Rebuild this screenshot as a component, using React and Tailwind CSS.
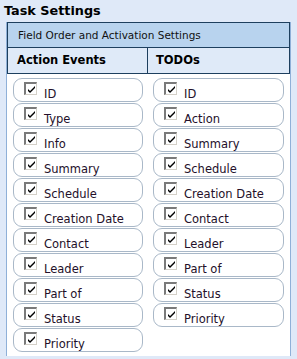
import React from "react";

const left = ["ID","Type","Info","Summary","Schedule","Creation Date","Contact","Leader","Part of","Status","Priority"];
const right = ["ID","Action","Summary","Schedule","Creation Date","Contact","Leader","Part of","Status","Priority"];

function Check() {
  return (
    <div className="w-[13px] h-[13px] bg-white border-t-2 border-l-2 border-t-[#7a7a7a] border-l-[#7a7a7a] border-b border-r border-b-[#d4d0c8] border-r-[#d4d0c8] flex items-center justify-center shrink-0">
      <svg width="9" height="9" viewBox="0 0 9 9">
        <path d="M1 4 L3 6 L8 1 L8 3 L3 8 L1 6 Z" fill="#000" />
      </svg>
    </div>
  );
}

function Item({ label }) {
  return (
    <div className="h-[24px] mb-[1px] rounded-[9px] border border-[#a9b8c8] bg-white flex items-start pl-[10px] pt-[3px]">
      <Check />
      <span className="ml-[7px] mt-[5px] leading-[14px] text-[11.5px] text-[#24102a]">{label}</span>
    </div>
  );
}

export default function App() {
  return (
    <div className="w-[297px] h-[359px] bg-[#dfe9f8] overflow-hidden" style={{ fontFamily: '"DejaVu Sans", Verdana, sans-serif' }}>
      <div className="h-[22px] pl-[4px] pt-[3px] leading-[15px] text-[12.8px] font-bold text-black">Task Settings</div>
      <div className="ml-[6px] w-[285px] h-[334px] bg-white border-l border-r border-[#8fb0d8] flex flex-col">
        <div className="h-[26px] border border-[#1d3f5e] bg-[#b8d3ee] flex items-center pl-[10px] pt-[1px] text-[10.5px] text-[#111]">Field Order and Activation Settings</div>
        <div className="h-[26px] flex border-b border-r border-[#1d3f5e] bg-[#dfeaf8] text-[11.5px] font-bold text-black">
          <div className="w-[141px] border-l border-r border-[#1d3f5e] flex items-center pl-[9px] pt-[1px]">Action Events</div>
          <div className="flex-1 flex items-center pl-[8px] pt-[1px]">TODOs</div>
        </div>
        <div className="flex pt-[4px]">
          <div className="w-[141px] pl-[6px] pr-[5px]">
            {left.map((l) => <Item key={l} label={l} />)}
          </div>
          <div className="w-[142px] pl-[5px] pr-[6px]">
            {right.map((l) => <Item key={l} label={l} />)}
          </div>
        </div>
      </div>
    </div>
  );
}
